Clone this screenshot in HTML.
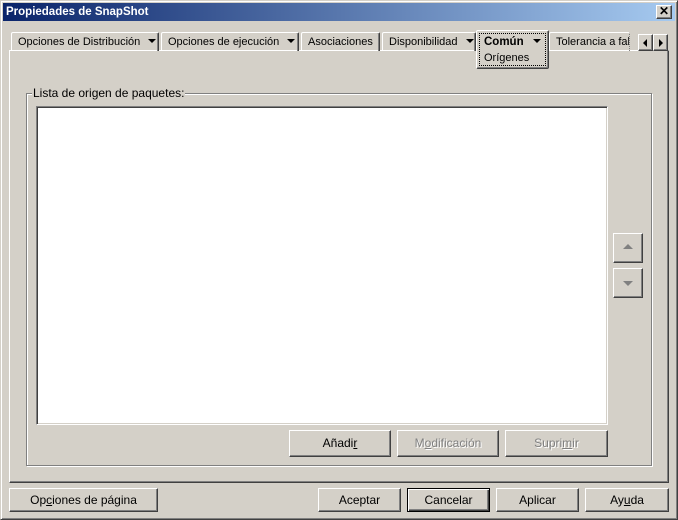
<!DOCTYPE html>
<html><head><meta charset="utf-8">
<style>
*{box-sizing:border-box;margin:0;padding:0}
body{width:678px;height:520px;background:#d4d0c8;font-family:"Liberation Sans",sans-serif;font-size:11px;color:#000;position:relative;overflow:hidden}
.a{position:absolute}
.win{left:0;top:0;width:678px;height:520px;border-top:1px solid #d4d0c8;border-left:1px solid #d4d0c8;border-right:1px solid #404040;border-bottom:1px solid #404040;box-shadow:inset 1px 1px 0 #fff,inset -1px -1px 0 #808080}
.title{left:3px;top:3px;width:672px;height:18px;background:linear-gradient(to right,#0a246a,#a6caf0);color:#fff;font-weight:bold;font-size:11.5px;line-height:18px;padding-left:3px}
.btn{position:absolute;background:#d4d0c8;border-top:1px solid #fff;border-left:1px solid #fff;border-right:1px solid #404040;border-bottom:1px solid #404040;box-shadow:inset -1px -1px 0 #808080;text-align:center;font-size:12px}
.dis{color:#808080;text-shadow:1px 1px 0 #fff}
.tab{position:absolute;top:32px;height:19px;border-top:1px solid #fff;border-left:1px solid #fff;border-right:1px solid #404040;box-shadow:inset -1px 0 0 #808080;font-size:11px;line-height:18px;padding-left:6px;white-space:nowrap;overflow:hidden;border-radius:2px 2px 0 0}
.arr{display:inline-block;width:0;height:0;border-left:4px solid transparent;border-right:4px solid transparent;border-top:4px solid #000;vertical-align:middle;margin-left:8px;margin-bottom:2px}
u{text-decoration:underline}
</style></head><body>
<div class="a win"></div>
<div class="a title">Propiedades de SnapShot</div>
<div class="btn" style="left:656px;top:5px;width:16px;height:14px;font-size:12px;line-height:11px;font-weight:bold">✕</div>

<div class="a" style="left:9px;top:50px;width:660px;height:433px;border-top:1px solid #fff;border-left:1px solid #fff;border-right:1px solid #404040;border-bottom:1px solid #404040;box-shadow:inset -1px -1px 0 #808080"></div>

<div class="tab" style="left:11px;width:148px">Opciones de Distribución<span class="arr"></span></div>
<div class="tab" style="left:161px;width:138px">Opciones de ejecución<span class="arr"></span></div>
<div class="tab" style="left:301px;width:79px">Asociaciones</div>
<div class="tab" style="left:382px;width:94px">Disponibilidad<span class="arr"></span></div>
<div class="a" style="left:476px;top:30px;width:73px;height:39px;background:#d4d0c8;border-top:1px solid #fff;border-left:1px solid #fff;border-right:1px solid #404040;border-bottom:1px solid #404040;box-shadow:inset -1px -1px 0 #808080;border-radius:2px"></div>
<div class="a" style="left:479px;top:33px;width:67px;height:33px;border:1px dotted #000"></div>
<div class="a" style="left:484px;top:35px;font-weight:bold;font-size:11.5px;line-height:14px">Común<span class="arr" style="margin-left:9px"></span></div>
<div class="a" style="left:484px;top:51px;font-size:11px;line-height:14px">Orígenes</div>
<div class="tab" style="left:549px;width:81px;border-right:1px dotted #808080;box-shadow:none">Tolerancia a fal</div>
<div class="btn" style="left:638px;top:34px;width:15px;height:17px"><span class="a" style="left:4px;top:4px;border-top:4px solid transparent;border-bottom:4px solid transparent;border-right:4px solid #000"></span></div>
<div class="btn" style="left:653px;top:34px;width:15px;height:17px"><span class="a" style="left:5px;top:4px;border-top:4px solid transparent;border-bottom:4px solid transparent;border-left:4px solid #000"></span></div>

<div class="a" style="left:26px;top:93px;width:626px;height:373px;border:1px solid #808080;box-shadow:1px 1px 0 #fff,inset 1px 1px 0 #fff"></div>
<div class="a" style="left:32px;top:86px;background:#d4d0c8;padding:0 1px;font-size:12px">Lista de origen de paquetes:</div>
<div class="a" style="left:36px;top:106px;width:572px;height:319px;background:#fff;border-top:1px solid #808080;border-left:1px solid #808080;border-right:1px solid #fff;border-bottom:1px solid #fff;box-shadow:inset 1px 1px 0 #404040,inset -1px -1px 0 #d4d0c8"></div>

<div class="btn" style="left:613px;top:233px;width:30px;height:30px"><span class="a" style="left:9px;top:10px;border-left:5px solid transparent;border-right:5px solid transparent;border-bottom:5px solid #808080"></span></div>
<div class="btn" style="left:613px;top:268px;width:30px;height:30px"><span class="a" style="left:9px;top:12px;border-left:5px solid transparent;border-right:5px solid transparent;border-top:5px solid #808080"></span></div>

<div class="btn" style="left:289px;top:430px;width:102px;height:27px;line-height:25px">Añadi<u>r</u></div>
<div class="btn dis" style="left:397px;top:430px;width:102px;height:27px;line-height:25px">M<u>o</u>dificación</div>
<div class="btn dis" style="left:505px;top:430px;width:103px;height:27px;line-height:25px">Supri<u>m</u>ir</div>

<div class="btn" style="left:9px;top:488px;width:149px;height:24px;line-height:22px">Op<u>c</u>iones de página</div>
<div class="btn" style="left:318px;top:488px;width:83px;height:24px;line-height:22px">Aceptar</div>
<div class="btn" style="left:407px;top:488px;width:83px;height:24px;line-height:22px;border:1px solid #000;box-shadow:inset 1px 1px 0 #fff,inset -1px -1px 0 #404040,inset -2px -2px 0 #808080">Cancelar</div>
<div class="btn" style="left:496px;top:488px;width:83px;height:24px;line-height:22px">Aplicar</div>
<div class="btn" style="left:585px;top:488px;width:84px;height:24px;line-height:22px">Ay<u>u</u>da</div>
</body></html>
